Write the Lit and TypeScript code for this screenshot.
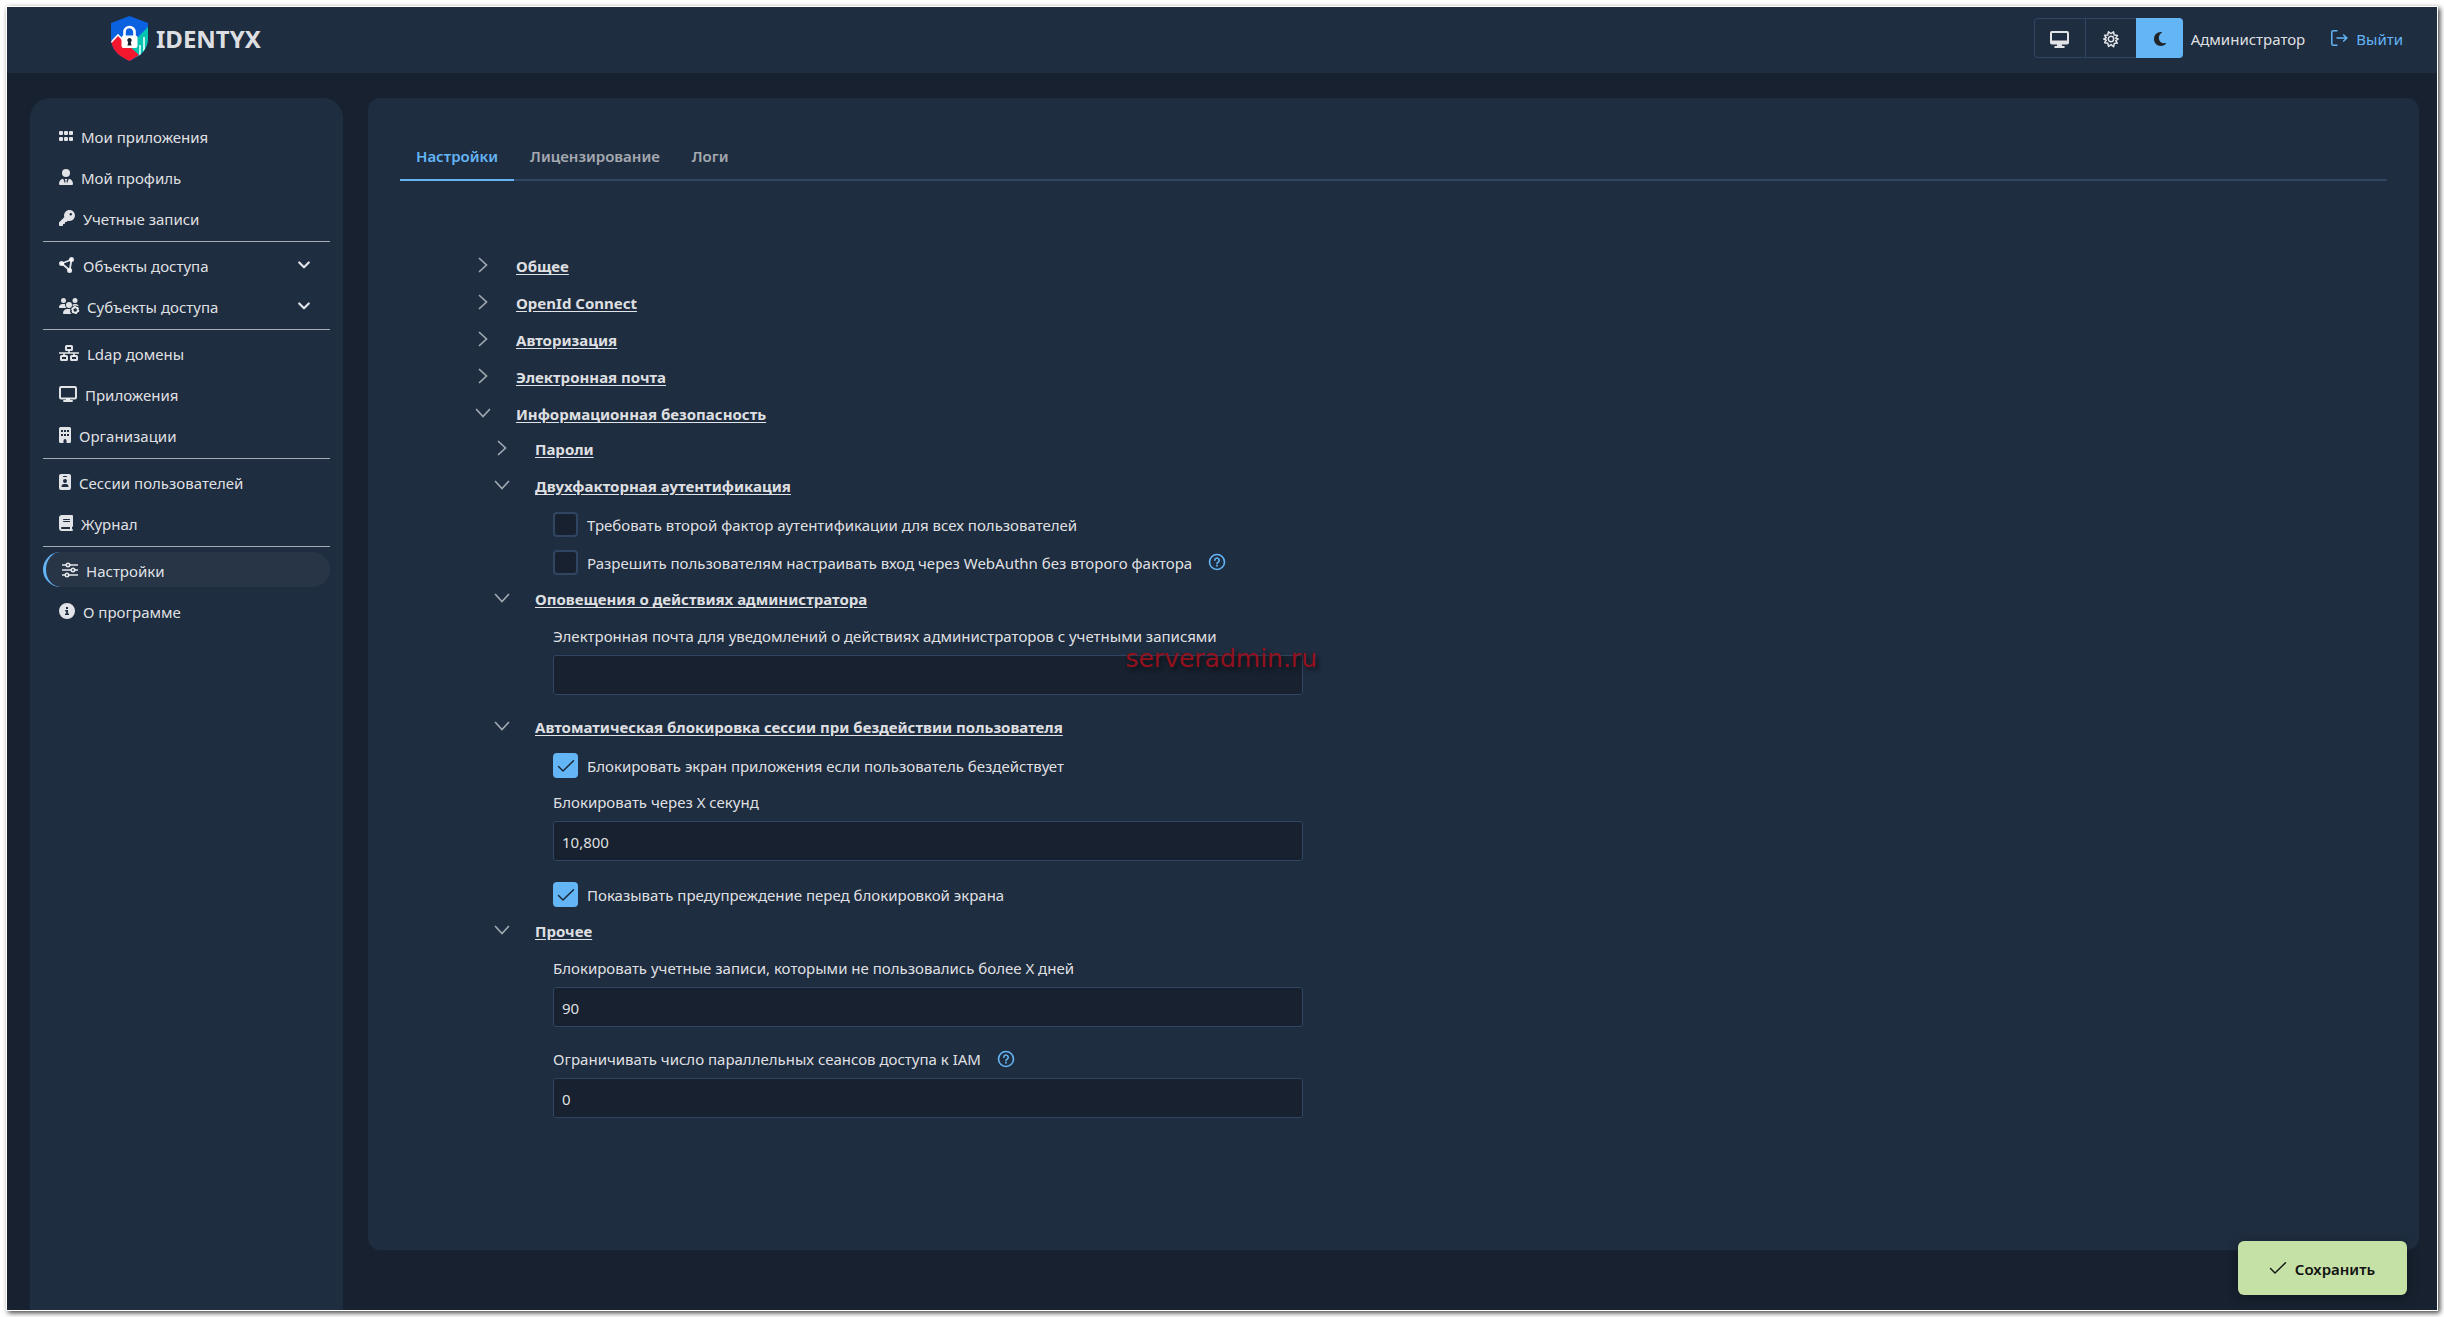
import { LitElement, html, svg, css, nothing } from "lit";
import { customElement, state } from "lit/decorators.js";
import { classMap } from "lit/directives/class-map.js";

const ICONS: Record<string, { box: string; w: number; body: unknown }> = {
  grid: {
    box: "0 0 14 16", w: 14,
    body: svg`<rect x="0" y="3" width="4" height="4" rx="1"/><rect x="5" y="3" width="4" height="4" rx="1"/><rect x="10" y="3" width="4" height="4" rx="1"/><rect x="0" y="9" width="4" height="4" rx="1"/><rect x="5" y="9" width="4" height="4" rx="1"/><rect x="10" y="9" width="4" height="4" rx="1"/>`,
  },
  profile: {
    box: "0 0 14 16", w: 14,
    body: svg`<circle cx="7" cy="4" r="4"/><path d="M0 15c0-3 1.6-5 4.200-5.300L6 14.500l.5-2.800L5.600 10h2.800l-.9 1.700.5 2.800 1.800-4.800C12.400 10 14 12 14 15a1 1 0 0 1-1 1H1a1 1 0 0 1-1-1z"/>`,
  },
  key: {
    box: "0 0 16 16", w: 16,
    body: svg`<path fill-rule="evenodd" d="M10.500 11a5.500 5.500 0 1 0-5.250-3.850L.22 12.220A.75.75 0 0 0 0 12.750v2.500c0 .41.34.75.75.75h2.500c.41 0 .75-.34.75-.75V14h1.250c.41 0 .75-.34.75-.75V12h1.250c.2 0 .39-.08.53-.22l1.070-1.030c.52.16 1.070.25 1.650.25zM11.750 3a1.250 1.250 0 1 1 0 2.500 1.250 1.250 0 0 1 0-2.500z"/>`,
  },
  nodes: {
    box: "0 0 16 16", w: 16,
    body: svg`<path d="M12.500 2.500 2.800 6.500l7.900 6.800z" fill="none" stroke="currentColor" stroke-width="1.800" stroke-linejoin="round"/><circle cx="12.500" cy="2.500" r="2.500"/><circle cx="2.500" cy="6.500" r="2.500"/><circle cx="10.600" cy="13.500" r="2.500"/>`,
  },
  users: {
    box: "0 0 20 16", w: 20,
    body: svg`<circle cx="4.500" cy="2.500" r="2.500"/><circle cx="16" cy="2.500" r="2.500"/><circle cx="10" cy="7" r="3"/><path d="M0 9.300C0 7.500 1.500 6 3.300 6h1.400c.5 0 1 .1 1.400.3A4 4 0 0 0 7.300 10H.7a.7.700 0 0 1-.7-.7zM4 15.200C4 12.900 5.900 11 8.200 11h3.200a4.800 4.800 0 0 0 1 5H4.800a.8.800 0 0 1-.8-.8zM13.500 6.500c1.500-.9 5.500-1 6.300 1.700l-2-.5-2.500-.2-1.500 1z"/><circle cx="16.200" cy="12" r="2.600" fill="none" stroke="currentColor" stroke-width="1.700"/><circle cx="16.200" cy="12" r="3.500" fill="none" stroke="currentColor" stroke-width="1.200" stroke-dasharray="2 1.660"/>`,
  },
  network: {
    box: "0 0 20 16", w: 20,
    body: svg`<path d="M0 7.200h20v1.600H0zM9.200 5h1.600v3H9.200zM4.200 8h1.600v3H4.200zM14.200 8h1.600v3h-1.600z"/><g fill="none" stroke="currentColor" stroke-width="2"><rect x="7" y="1" width="6" height="4" rx=".6"/><rect x="2" y="11" width="6" height="4" rx=".6"/><rect x="12" y="11" width="6" height="4" rx=".6"/></g>`,
  },
  desktop: {
    box: "0 0 18 16", w: 18,
    body: svg`<rect x="1" y="1" width="16" height="11.500" rx="1.200" fill="none" stroke="currentColor" stroke-width="2"/><path d="M7.200 12.500h3.600l.4 1.500H13a1 1 0 0 1 0 2H5a1 1 0 0 1 0-2h1.800z"/>`,
  },
  building: {
    box: "0 0 12 16", w: 12,
    body: svg`<path fill-rule="evenodd" d="M1.500 0h9A1.500 1.500 0 0 1 12 1.500v13a1.500 1.500 0 0 1-1.500 1.500H7.500v-2.500a1.500 1.500 0 0 0-3 0V16h-3A1.500 1.500 0 0 1 0 14.500v-13A1.500 1.500 0 0 1 1.500 0zM2 3v2h2V3zm3 0v2h2V3zm3 0v2h2V3zM2 7v2h2V7zm3 0v2h2V7zm3 0v2h2V7z"/>`,
  },
  badge: {
    box: "0 0 12 16", w: 12,
    body: svg`<path fill-rule="evenodd" d="M2 0h8a2 2 0 0 1 2 2v12a2 2 0 0 1-2 2H2a2 2 0 0 1-2-2V2a2 2 0 0 1 2-2zM4.500 2a.5.500 0 0 0 0 1h3a.5.500 0 0 0 0-1zM6 5a2 2 0 1 0 0 4 2 2 0 0 0 0-4zM2.500 12.500c0 .3.2.5.5.5h6c.3 0 .5-.2.500-.5A2.500 2.500 0 0 0 7 10H5a2.500 2.500 0 0 0-2.500 2.500z"/>`,
  },
  book: {
    box: "0 0 14 16", w: 14,
    body: svg`<path fill-rule="evenodd" d="M3 0h10a1 1 0 0 1 1 1v10a1 1 0 0 1-1 1v2a1 1 0 0 1 0 2H3a3 3 0 0 1-3-3V3a3 3 0 0 1 3-3zm0 12a1 1 0 0 0 0 2h8v-2zM4.500 4a.5.500 0 0 0 0 1h6a.5.500 0 0 0 0-1zm0 2a.5.500 0 0 0 0 1h6a.5.500 0 0 0 0-1z"/>`,
  },
  sliders: {
    box: "0 0 16 16", w: 16,
    body: svg`<g fill="none" stroke="currentColor" stroke-width="1.600"><path d="M0 3h4.300M7.700 3H16M0 8h9.300M12.700 8H16M0 13h3.300M6.700 13H16"/><circle cx="6" cy="3" r="1.700"/><circle cx="11" cy="8" r="1.700"/><circle cx="5" cy="13" r="1.700"/></g>`,
  },
  info: {
    box: "0 0 16 16", w: 16,
    body: svg`<path fill-rule="evenodd" d="M8 0a8 8 0 1 1 0 16A8 8 0 0 1 8 0zM7 4v2h2V4zM6.200 7v1.500H7.200v2H6v1.500h4v-1.500H9V7z"/>`,
  },
  monitor: {
    box: "0 0 19 17", w: 19,
    body: svg`<path fill-rule="evenodd" d="M2 0h15a2 2 0 0 1 2 2v9.500a2 2 0 0 1-2 2h-5.200l.4 1.500h1.600a1 1 0 0 1 0 2H5.200a1 1 0 0 1 0-2h1.600l.4-1.500H2a2 2 0 0 1-2-2V2a2 2 0 0 1 2-2zm0 2v7.500h15V2z"/>`,
  },
  sun: {
    box: "0 0 16 16", w: 16,
    body: svg`<g fill="none" stroke="currentColor" stroke-width="1.500" stroke-linejoin="round"><path d="M8 2.600 10.500.8l.7 3.200 3.200.6-1.700 2.600 2.500.8-2.500 1.800 1.700 2.300-3.200.5-.6 3.200L8 13.600l-2.500 1.800-.7-3.200-3.200-.5 1.700-2.500L.8 8l2.500-1.300-1.700-2.400L4.800 4l.6-3.200z"/><circle cx="8" cy="8" r="2.700"/></g>`,
  },
  moon: {
    box: "0 0 14 16", w: 14,
    body: svg`<path d="M7.800 1C3.900 1 1 4.100 1 8s2.900 7 6.800 7c2 0 3.700-.7 5-2 .4-.4 0-1-.5-.9-4 .7-6.400-2-6.400-5.400 0-2.100 1.100-3.900 2.800-4.900.5-.3.300-.7-.1-.8z"/>`,
  },
  logout: {
    box: "0 0 17 16", w: 17,
    body: svg`<path d="M6.500.8H2.300Q.8.800.8 2.300v11.400q0 1.500 1.500 1.500h4.200M5.500 8h10M12.200 4.500 15.800 8l-3.600 3.500" fill="none" stroke="currentColor" stroke-width="1.500"/>`,
  },
  check: {
    box: "0 0 16 12", w: 16,
    body: svg`<path d="M.5 6.500 5 11 15.500.7" fill="none" stroke="currentColor" stroke-width="1.400" stroke-linecap="round" stroke-linejoin="round"/>`,
  },
  help: {
    box: "0 0 18 18", w: 18,
    body: svg`<g fill="none" stroke="currentColor" stroke-width="1.600"><circle cx="9" cy="9" r="7.500"/><path d="M6.800 7.200a2.200 2.200 0 1 1 3.400 1.900c-.8.500-1.200.8-1.200 1.700" stroke-linecap="round"/></g><circle cx="9" cy="12.800" r=".95"/>`,
  },
  chevron: {
    box: "0 0 14 14", w: 14,
    body: svg`<path d="M3.500.5 10.500 7l-7 6.500" fill="none" stroke="currentColor" stroke-width="1.700" stroke-linecap="round"/>`,
  },
  chevronDown: {
    box: "0 0 14 14", w: 14,
    body: svg`<path d="M.5 3.500 7 10.500l6.500-7" fill="none" stroke="currentColor" stroke-width="1.700" stroke-linecap="round"/>`,
  },
  expand: {
    box: "0 0 12 8", w: 12,
    body: svg`<path d="M1.200 1.500 6 6.300l4.800-4.800" fill="none" stroke="currentColor" stroke-width="2.200" stroke-linecap="round" stroke-linejoin="round"/>`,
  },
};

const icon = (name: string) => {
  const i = ICONS[name];
  return html`<svg class="icon" viewBox=${i.box} width=${i.w} height=${i.box.split(" ")[3]} fill="currentColor" aria-hidden="true">${i.body}</svg>`;
};

type MenuItem = { icon: string; label: string; nested?: boolean };

const MENU: MenuItem[][] = [
  [
    { icon: "grid", label: "Мои приложения" },
    { icon: "profile", label: "Мой профиль" },
    { icon: "key", label: "Учетные записи" },
  ],
  [
    { icon: "nodes", label: "Объекты доступа", nested: true },
    { icon: "users", label: "Субъекты доступа", nested: true },
  ],
  [
    { icon: "network", label: "Ldap домены" },
    { icon: "desktop", label: "Приложения" },
    { icon: "building", label: "Организации" },
  ],
  [
    { icon: "badge", label: "Сессии пользователей" },
    { icon: "book", label: "Журнал" },
  ],
  [
    { icon: "sliders", label: "Настройки" },
    { icon: "info", label: "О программе" },
  ],
];

const base = css`
  * { box-sizing: border-box; }
  .icon { display: block; flex: none; overflow: visible; }
  button, input { font: inherit; color: inherit; }
  a { color: inherit; text-decoration: none; }
`;

@customElement("app-header")
export class AppHeader extends LitElement {
  @state() private theme = "moon";

  static styles = [base, css`
    :host { display: block; }
    .bar { display: flex; align-items: center; height: 66px; padding: 0 34px 4px 104px; background: var(--card); }
    .brand { display: flex; align-items: center; gap: 8px; font-size: 24px; font-weight: 700; line-height: 34px; }
    .brand-name { padding-top: 2px; }
    .tools { display: flex; align-items: center; margin-left: auto; }
    .themes { display: flex; }
    .theme { display: flex; align-items: center; justify-content: center; width: 51px; height: 40px; padding: 2px 0 0; border: 1px solid var(--line); border-right: 0; background: var(--card); }
    .theme:first-child { border-radius: 4px 0 0 4px; }
    .theme:last-child { width: 47px; border-radius: 0 4px 4px 0; }
    .theme.on { background: var(--primary); border-color: var(--primary); color: #212529; }
    .user { margin-left: 8px; }
    .exit { display: flex; align-items: center; gap: 8px; margin-left: 26px; color: var(--primary); }
    .label { padding-top: 2px; }
  `];

  render() {
    return html`
      <header class="bar">
        <a class="brand" href="#home">
          <svg class="icon" width="37" height="45" viewBox="0 0 37 45" aria-hidden="true">
            <defs><clipPath id="shield"><path d="M18.500 0 37 7v15c0 11-7 18-18.500 23C7 40 0 33 0 22V7z"/></clipPath></defs>
            <g clip-path="url(#shield)">
              <rect width="37" height="45" fill="#0a62e0"/>
              <path d="M37 11 16 32l11.500 10L37 34z" fill="#06c5b0"/>
              <path d="M0 26 7 18.500l8 8.500 13 12-9 6H0z" fill="#f4172d"/>
              <path d="M0 26.500 7 19l9 9" fill="none" stroke="#fff" stroke-width="1.600"/>
              <path d="M29 40V29M33 36V21" stroke="#dffaf5" stroke-width="1.700"/>
            </g>
            <path d="M13.500 21v-5a5 5 0 0 1 10 0v5" fill="none" stroke="#fff" stroke-width="2.600"/>
            <rect x="10.500" y="19.500" width="16" height="12.500" rx="2" fill="#fff"/>
            <path d="M18.500 22a2.200 2.200 0 0 1 1.300 4l.7 3.500h-4l.7-3.500a2.200 2.200 0 0 1 1.300-4z" fill="#17212f"/>
          </svg>
          <span class="brand-name">IDENTYX</span>
        </a>
        <div class="tools">
          <div class="themes" role="group" aria-label="Тема">
            ${[["monitor", "Системная"], ["sun", "Светлая"], ["moon", "Тёмная"]].map(([name, label]) => html`
              <button class=${classMap({ theme: true, on: this.theme === name })} aria-label=${label} @click=${() => (this.theme = name)}>${icon(name)}</button>`)}
          </div>
          <span class="user label">Администратор</span>
          <a class="exit" href="#logout">${icon("logout")}<span class="label">Выйти</span></a>
        </div>
      </header>`;
  }
}

@customElement("app-menu")
export class AppMenu extends LitElement {
  @state() private current = "Настройки";

  static styles = [base, css`
    :host { display: block; }
    .menu { display: flex; flex-direction: column; gap: 6px; min-height: 100%; padding: 20px 13px; border-radius: 20px 20px 0 0; background: var(--card); }
    .rule { width: 100%; height: 1px; margin: 0 0 -1px; border: 0; background: rgba(255, 255, 255, 0.6); }
    .item { display: flex; align-items: center; gap: 8px; height: 35px; padding: 0 20px 0 16px; border-radius: 20px; }
    .item.on { border-left: 3px solid var(--primary); background: rgba(255, 255, 255, 0.04); }
    .text { padding-top: 3px; }
    .arrow { margin-left: auto; }
  `];

  render() {
    return html`
      <nav class="menu">
        ${MENU.map((group, n) => html`
          ${n ? html`<hr class="rule" />` : nothing}
          ${group.map((item) => html`
            <a class=${classMap({ item: true, on: item.label === this.current })} href="#" @click=${() => (this.current = item.label)}>
              ${icon(item.icon)}<span class="text">${item.label}</span>
              ${item.nested ? html`<span class="arrow">${icon("expand")}</span>` : nothing}
            </a>`)}
        `)}
      </nav>`;
  }
}

@customElement("settings-page")
export class SettingsPage extends LitElement {
  static styles = [base, css`
    :host { display: block; padding-bottom: 60px; box-sizing: border-box; }
    .card { min-height: 100%; padding: 32px; border-radius: 12px; background: var(--card); }
    .tabs { display: flex; border-bottom: 2px solid var(--line); }
    .tab { height: 51px; margin-bottom: -2px; padding: 3px 16px 0; border: 0; border-bottom: 2px solid transparent; background: none; color: var(--muted); font-weight: 600; }
    .tab.on { border-color: var(--primary); color: var(--primary); }
    .tree { padding: 65px 76px 0; }
    .branch { margin-top: -2px; padding-left: 19px; }
    .leaf { width: 750px; max-width: 100%; margin-left: 58px; }
    .node { display: flex; align-items: center; gap: 26px; height: 37px; padding: 0; border: 0; background: none; font-weight: 700; }
    .node .icon { color: #a0a8b1; }
    .title { padding-top: 3px; text-decoration: underline; text-underline-offset: 2px; }
    .tick { display: flex; align-items: center; height: 38px; padding-top: 4px; }
    .tick label { padding: 1px 0 0 9px; }
    .box { position: relative; display: flex; width: 25px; height: 25px; }
    .box input { appearance: none; width: 25px; height: 25px; margin: 0; border: 2px solid var(--line); border-radius: 4px; background: var(--ground); }
    .box input:checked { border-color: var(--primary); background: var(--primary); }
    .box .icon { position: absolute; left: 5px; top: 7px; color: #17212f; pointer-events: none; }
    .help { margin-left: 16px; padding: 0; border: 0; background: none; color: var(--primary); }
    .caption { display: flex; align-items: center; height: 39px; }
    .field { padding-bottom: 12px; }
    .field input { display: block; width: 100%; height: 40px; padding: 2px 8px 0; border: 1px solid var(--line); border-radius: 3px; background: var(--ground); }
    .mark { position: absolute; right: -14px; top: -10px; font: 25px/28px "DejaVu Sans", sans-serif; color: #93101d; text-shadow: 3px 3px 4px #0d1218; pointer-events: none; }
    .control { position: relative; }
  `];

  private node(label: string, open = false) {
    return html`<button class="node" aria-expanded=${open}>${icon(open ? "chevronDown" : "chevron")}<span class="title">${label}</span></button>`;
  }

  private help() {
    return html`<button class="help" aria-label="Справка">${icon("help")}</button>`;
  }

  private tick(id: string, label: string, checked: boolean, help = false) {
    return html`
      <div class="tick">
        <span class="box"><input id=${id} type="checkbox" .checked=${checked} />${checked ? icon("check") : nothing}</span>
        <label for=${id}>${label}</label>${help ? this.help() : nothing}
      </div>`;
  }

  private field(id: string, label: string, value: string, extra: { help?: boolean; mark?: boolean } = {}) {
    return html`
      <div class="field">
        <div class="caption"><label for=${id}>${label}</label>${extra.help ? this.help() : nothing}</div>
        <div class="control"><input id=${id} type="text" .value=${value} />${extra.mark ? html`<span class="mark">serveradmin.ru</span>` : nothing}</div>
      </div>`;
  }

  render() {
    return html`
      <main class="card">
        <div class="tabs" role="tablist">
          <button class="tab on" role="tab" aria-selected="true">Настройки</button>
          <button class="tab" role="tab" aria-selected="false">Лицензирование</button>
          <button class="tab" role="tab" aria-selected="false">Логи</button>
        </div>
        <div class="tree">
          ${["Общее", "OpenId Connect", "Авторизация", "Электронная почта"].map((label) => this.node(label))}
          ${this.node("Информационная безопасность", true)}
          <div class="branch">
            ${this.node("Пароли")}
            ${this.node("Двухфакторная аутентификация", true)}
            <div class="leaf">
              ${this.tick("second", "Требовать второй фактор аутентификации для всех пользователей", false)}
              ${this.tick("webauthn", "Разрешить пользователям настраивать вход через WebAuthn без второго фактора", false, true)}
            </div>
            ${this.node("Оповещения о действиях администратора", true)}
            <div class="leaf">${this.field("mail", "Электронная почта для уведомлений о действиях администраторов с учетными записями", "", { mark: true })}</div>
            ${this.node("Автоматическая блокировка сессии при бездействии пользователя", true)}
            <div class="leaf">
              ${this.tick("lock", "Блокировать экран приложения если пользователь бездействует", true)}
              ${this.field("delay", "Блокировать через X секунд", "10,800")}
              ${this.tick("warn", "Показывать предупреждение перед блокировкой экрана", true)}
            </div>
            ${this.node("Прочее", true)}
            <div class="leaf">
              ${this.field("days", "Блокировать учетные записи, которыми не пользовались более X дней", "90")}
              ${this.field("sessions", "Ограничивать число параллельных сеансов доступа к IAM", "0", { help: true })}
            </div>
          </div>
        </div>
      </main>`;
  }
}

@customElement("app-root")
export class AppRoot extends LitElement {
  static styles = [base, css`
    :host {
      --ground: #17212f; --card: #1f2d40; --line: #304562; --primary: #64b5f6; --muted: rgba(255, 255, 255, 0.6);
      display: block; height: 100vh; padding: 7px; background: #fff;
      color: rgba(255, 255, 255, 0.87); font: 15px/20px "Noto Sans", "Segoe UI", sans-serif; box-sizing: border-box;
    }
    .frame { position: relative; display: flex; flex-direction: column; height: 100%; background: var(--ground); box-shadow: 0 0 0 1px #fff, 2px 2px 5px 1px rgba(0, 0, 0, 0.75); }
    .body { display: grid; grid-template-columns: 313px 1fr; gap: 25px; flex: 1; min-height: 0; padding: 25px 18px 0 23px; overflow: hidden; }
    .save { position: absolute; right: 30px; bottom: 15px; display: flex; align-items: center; justify-content: center; gap: 9px; width: 169px; height: 54px; padding: 0; border: 0; border-radius: 6px; background: #c5e1a5; color: #121212; font-weight: 600; box-shadow: 0 2px 12px rgba(0, 0, 0, 0.35); }
    .save-text { padding-top: 2px; }
  `];

  render() {
    return html`
      <div class="frame">
        <app-header></app-header>
        <div class="body">
          <app-menu></app-menu>
          <settings-page></settings-page>
        </div>
        <button class="save">${icon("check")}<span class="save-text">Сохранить</span></button>
      </div>`;
  }
}
